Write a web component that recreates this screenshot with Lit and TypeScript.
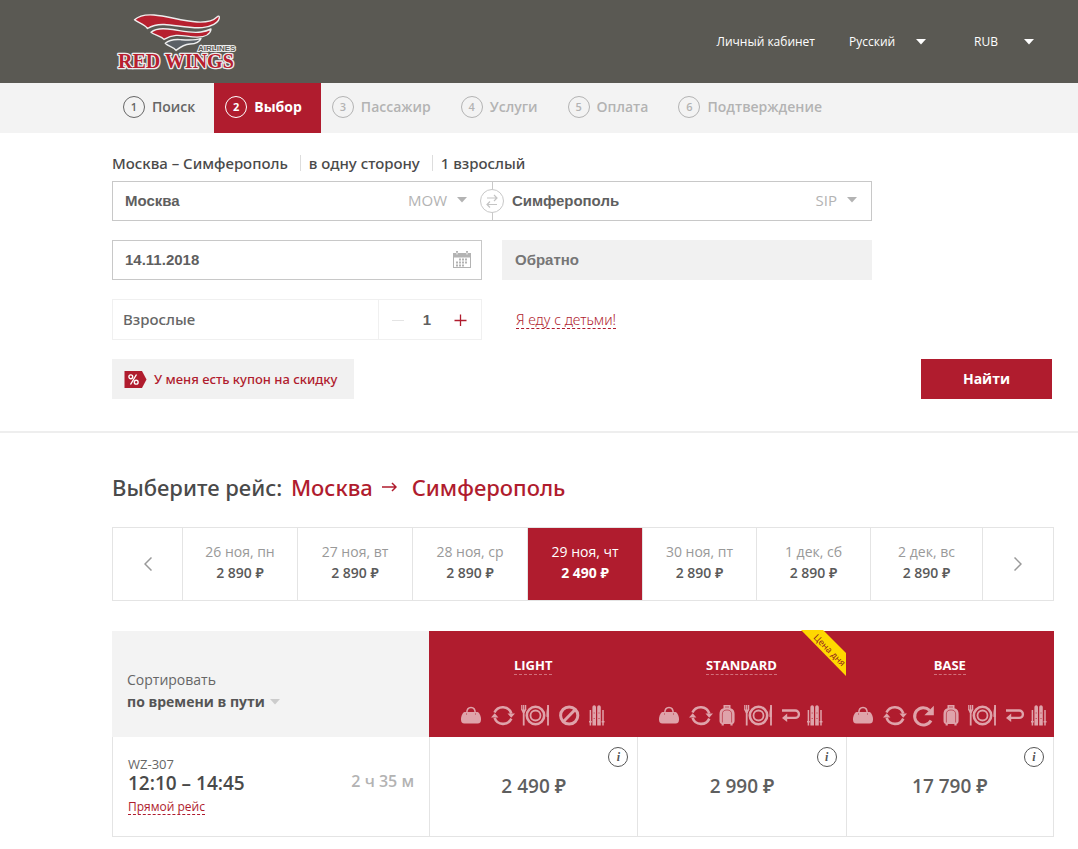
import { LitElement, html, css, svg, nothing } from "lit";
import { customElement, property, state } from "lit/decorators.js";
import { classMap } from "lit/directives/class-map.js";

const base = css`
  *,
  *::before,
  *::after {
    box-sizing: border-box;
  }
  button,
  input,
  select {
    font: inherit;
    color: inherit;
    background: none;
    border: 0;
    border-radius: 0;
    margin: 0;
    padding: 0;
    outline: 0;
  }
  button,
  select {
    cursor: pointer;
  }
  select {
    appearance: none;
  }
  a {
    color: inherit;
    text-decoration: none;
  }
  svg {
    display: block;
    flex: none;
  }
  .medium {
    font-family: "Noto Sans", "Open Sans", sans-serif;
    font-weight: 500;
  }
`;

const caret = svg`<svg class="caret" width="10" height="6" viewBox="0 0 10 6" aria-hidden="true"><path fill="currentColor" d="M0 0h10L5 5.5z"/></svg>`;

type IconName = "bag" | "exchange" | "redo" | "case" | "meal" | "ban" | "back" | "ski";

const iconBox: Record<IconName, number> = { bag: 22, exchange: 22, redo: 22, case: 17, meal: 30, ban: 22, back: 17, ski: 16 };

const iconShape = {
  bag: svg`<path fill="currentColor" d="M3.500 7h13c1.600 0 3.500 4 3.500 7.200 0 2.900-1 4.200-3.400 4.200H3.400C1 18.400 0 17.100 0 14.200 0 11 1.900 7 3.500 7z"/><path fill="none" stroke="currentColor" stroke-width="1.500" d="M5.800 8c0-3.600 1.700-5.500 4.200-5.500s4.200 1.900 4.200 5.500"/><path stroke="#b01c2e" stroke-width=".8" d="M5 9h1M14 9h1"/>`,
  exchange: svg`<g fill="none" stroke="currentColor" stroke-width="2.600"><path d="M3.500 7.500A9 9 0 0 1 20.300 8.500"/><path d="M20.300 13.600A9 9 0 0 1 3.600 12.800"/></g><path fill="currentColor" d="M16.500 8.400H24l-3.800 4.300zM0 12.600h7.400L3.700 8.300z"/>`,
  redo: svg`<path fill="none" stroke="currentColor" stroke-width="3" d="M16.500 5.200A8.700 8.700 0 1 0 18 15.500"/><path fill="currentColor" d="M20.800.8v9.400h-9.400z"/>`,
  case: svg`<path fill="currentColor" d="M4.500 0h7v3.200c3 .6 4.100 2.600 4.100 5.800v6.500c0 2-.6 3-2 3.500v1.500h-2.200V19H4.800v1.500H2.600V19C1 18.500.5 17.500.5 15.500V9c0-3.200 1-5.200 4-5.800z"/><path fill="none" stroke="#b01c2e" stroke-width=".6" d="M3.400 17.500V9c0-2.600 1.500-4 4.600-4s4.600 1.400 4.600 4v8.500M6 2h4"/>`,
  meal: svg`<g fill="none" stroke="currentColor"><circle cx="14.500" cy="10.500" r="8.700" stroke-width="2.600"/><circle cx="14.500" cy="10.500" r="5" stroke-width="1.800"/><path stroke-width="1.300" d="M.8 0v5M2.700 0v5M4.600 0v5"/><path stroke-width="1.800" d="M2.700 6v14.500M27 0v20.500"/></g><path fill="currentColor" d="M0 4.500h5.300L3.600 8H1.800zM27.800 0v12h-2.300c-.3-5 .3-10 2.300-12z"/>`,
  ban: svg`<g fill="none" stroke="currentColor" stroke-width="3"><circle cx="10.200" cy="10.500" r="8.600"/><path d="M4.500 16.500 16 4.700"/></g>`,
  back: svg`<path fill="none" stroke="currentColor" stroke-width="2.400" d="M0 5.500h13.200a3.400 3.400 0 0 1 0 7.400H4"/><path fill="currentColor" d="M0 12.900 5.200 8.600v8.400z"/>`,
  ski: svg`<path fill="currentColor" d="M3.400 20.500V2.300C3.400-.6 7-.6 7 2.300v18.200zM8.200 20.500V2.300c0-2.900 3.600-2.900 3.600 0v18.200z"/><g stroke="currentColor" stroke-width="1.500"><path d="M1.400 5v15.500M14 5v15.500M0 16.800h2.800M12.600 16.800h2.900"/></g><g stroke="#b01c2e" stroke-width=".8"><path d="M4.700 8h1M4.700 13.500h1M9.500 8h1M9.500 13.500h1"/></g>`,
};

@customElement("fare-icon")
class FareIcon extends LitElement {
  @property() name: IconName = "bag";
  static styles = css`
    :host {
      display: block;
      color: #dfa3aa;
    }
    svg {
      display: block;
      overflow: visible;
    }
  `;
  render() {
    return html`<svg width=${iconBox[this.name]} height="21" aria-hidden="true">${iconShape[this.name]}</svg>`;
  }
}

@customElement("site-header")
class SiteHeader extends LitElement {
  static styles = [
    base,
    css`
      :host {
        display: flex;
        align-items: center;
        justify-content: space-between;
        height: 83px;
        padding: 0 44px 0 114px;
        background: #5a5953;
        color: #fff;
        font-size: 12px;
      }
      .menu {
        display: flex;
        align-items: center;
      }
      .pick {
        display: flex;
        align-items: center;
        gap: 20px;
        margin-left: 34px;
      }
      .pick + .pick {
        margin-left: 48px;
        gap: 26px;
      }
      .name {
        font: bold 20px "Liberation Serif", serif;
      }
      .sub {
        font: bold 8px "Liberation Sans", sans-serif;
      }
    `,
  ];
  render() {
    return html`
      <a href="#" aria-label="Red Wings Airlines">
        <svg width="126" height="66" viewBox="114 8 126 66">
          <g stroke="#eee" stroke-width="1.400" stroke-linejoin="round">
            <path fill="#b7202f" d="M134.500 18.800C139 14.500 146 13.400 154 14c14 1 27 6 43 7 9 .5 16-1 20-5 1.500-1.500 2.600-1 2.300 1-1 5-8 8.800-17 9.600-12 1-27-2.600-38-3.100-7-.3-12 1-16.800 4-3-4.500-9-5.500-13-8.700z"/>
            <path fill="#b7202f" d="M151 31.200c4-3.400 10-4 17-3.200 12 1.200 22 4.600 33 3 4-.6 7-1.600 10-3-.4 5-6 8-14 8.100-8 0-14-2.200-21-1.700-5 .3-8.500 1.800-12 4-3-3.700-9.500-4-13-7.200z"/>
            <path fill="#5b6066" d="M165.300 42.200c4-3.500 9-4 15-3.600 8 .6 14 1.200 20.700-1.200-1.500 4-6 5.300-11 5.600-6 .4-9.500 2.900-14 6.400-2-3.400-8-3.800-10.700-7.200z"/>
          </g>
          <text class="name" x="118" y="67" fill="#b7202f" stroke="#eee" stroke-width="2.600" stroke-linejoin="round" paint-order="stroke">RED WINGS</text>
          <text class="sub" x="198" y="50" fill="#5a5953" stroke="#eee" stroke-width="2" paint-order="stroke">AIRLINES</text>
        </svg>
      </a>
      <div class="menu">
        <a href="#">Личный кабинет</a>
        <label class="pick">
          <select aria-label="Язык"><option>Русский</option></select>${caret}
        </label>
        <label class="pick">
          <select aria-label="Валюта"><option>RUB</option></select>${caret}
        </label>
      </div>
    `;
  }
}

@customElement("step-bar")
class StepBar extends LitElement {
  @property({ type: Number }) current = 2;
  static styles = [
    base,
    css`
      :host {
        display: flex;
        height: 50px;
        padding-left: 112px;
        background: #f3f3f3;
        font-size: 14px;
        font-weight: 600;
      }
      .step {
        display: flex;
        align-items: center;
        gap: 7px;
        padding: 0 19px 3px 11px;
        color: #b3b3b3;
      }
      .done {
        color: #666;
      }
      .active {
        background: #b01c2e;
        color: #fff;
        font-weight: 700;
      }
      .num {
        display: grid;
        place-items: center;
        width: 22px;
        height: 22px;
        border: 1px solid currentColor;
        border-radius: 50%;
        font-size: 11px;
      }
    `,
  ];
  render() {
    const steps = ["Поиск", "Выбор", "Пассажир", "Услуги", "Оплата", "Подтверждение"];
    return steps.map((s, i) => {
      const n = i + 1;
      return html`<a href="#" class=${classMap({ step: true, done: n < this.current, active: n === this.current })}
        ><span class="num">${n}</span><span>${s}</span></a
      >`;
    });
  }
}

@customElement("search-form")
class SearchForm extends LitElement {
  @state() adults = 1;
  static styles = [
    base,
    css`
      :host {
        display: block;
        padding: 19px 26px 32px 112px;
        border-bottom: 2px solid #eee;
      }
      .summary {
        display: flex;
        align-items: center;
        height: 22px;
        margin-bottom: 7px;
        font-size: 15px;
        color: #4a4a4a;
      }
      .summary span + span {
        margin-left: 12px;
        padding-left: 8px;
        border-left: 1px solid #ddd;
        line-height: 16px;
      }
      .fields {
        display: grid;
        grid-template-columns: 1fr 1fr;
        gap: 19px 20px;
        max-width: 760px;
      }
      .cities {
        grid-column: 1 / -1;
        display: grid;
        grid-template-columns: 1fr 1fr;
        position: relative;
        height: 40px;
        border: 1px solid #c8c8c8;
      }
      .city {
        display: flex;
        align-items: center;
        gap: 10px;
        padding: 0 25px 2px 12px;
        color: #b3b3b3;
      }
      .city + .city {
        padding: 0 14px 2px 19px;
        border-left: 1px solid #c8c8c8;
      }
      .value {
        flex: 1;
        min-width: 0;
        font: bold 15px "Liberation Sans", sans-serif;
        color: #5f5f5f;
      }
      .code {
        font-size: 15px;
        color: #b3b3b3;
      }
      .swap {
        position: absolute;
        top: 7px;
        left: calc(50% - 12px);
        display: grid;
        place-items: center;
        width: 24px;
        height: 24px;
        border: 1px solid #c8c8c8;
        border-radius: 50%;
        background: #fff;
        color: #c4c4c4;
      }
      .date {
        display: flex;
        align-items: center;
        height: 40px;
        padding: 0 10px 2px 12px;
        border: 1px solid #c8c8c8;
      }
      .return {
        border-color: #f1f1f1;
        background: #f1f1f1;
      }
      .return .value::placeholder {
        color: #767676;
        opacity: 1;
      }
      .people {
        display: flex;
        align-items: center;
        height: 41px;
        padding-left: 10px;
        border: 1px solid #f0f0f0;
        font-size: 15px;
        color: #666;
      }
      .people label {
        flex: 1;
        padding-bottom: 2px;
      }
      .counter {
        display: flex;
        align-items: center;
        justify-content: space-between;
        width: 103px;
        height: 39px;
        padding: 0 13px;
        border-left: 1px solid #f0f0f0;
      }
      .counter .value {
        flex: none;
        width: 20px;
        text-align: center;
      }
      .kids {
        align-self: center;
        justify-self: start;
        margin-left: 14px;
        border-bottom: 1px dashed #b01c2e;
        font-family: "Noto Sans", "Open Sans", sans-serif;
        font-size: 14px;
        line-height: 17px;
        font-weight: 300;
        color: #b01c2e;
      }
      .actions {
        display: flex;
        justify-content: space-between;
        margin-top: 19px;
      }
      .coupon {
        display: flex;
        align-items: center;
        gap: 7px;
        height: 40px;
        padding: 0 17px 0 12px;
        background: #f1f1f1;
        color: #b01c2e;
        font-size: 13px;
      }
      .submit {
        width: 131px;
        height: 40px;
        padding-bottom: 1px;
        background: #b01c2e;
        color: #fff;
        font-size: 14px;
        font-weight: 700;
      }
    `,
  ];
  render() {
    return html`
      <form @submit=${(e: Event) => e.preventDefault()}>
        <div class="summary medium"><span>Москва – Симферополь</span><span>в одну сторону</span><span>1 взрослый</span></div>
        <div class="fields">
          <div class="cities">
            <label class="city"><input class="value" aria-label="Откуда" value="Москва" /><span class="code">MOW</span>${caret}</label>
            <label class="city"><input class="value" aria-label="Куда" value="Симферополь" /><span class="code">SIP</span>${caret}</label>
            <button type="button" class="swap" aria-label="Поменять местами">
              <svg width="12" height="14" viewBox="0 0 12 14" fill="none" stroke="currentColor" stroke-width="1.200">
                <path d="M1 4h10M8 1l3 3-3 3M11 10.500H1M4 7.500l-3 3 3 3" />
              </svg>
            </button>
          </div>
          <label class="date">
            <input class="value" aria-label="Туда" value="14.11.2018" />
            <svg width="18" height="17" viewBox="0 0 18 17">
              <path fill="#b3b3b3" fill-rule="evenodd" d="M0 2h3V0h2v2h8V0h2v2h3v15H0zm1 4.500V16h16V6.500z" />
              <path fill="#fff" d="M3.500 1.500h1v2h-1zM13.500 1.500h1v2h-1z" />
              <path stroke="#b3b3b3" stroke-width="2" stroke-dasharray="2 1" d="M6 8.500h9M3 11.500h12M3 14.500h9" />
            </svg>
          </label>
          <label class="date return"><input class="value" aria-label="Обратно" placeholder="Обратно" /></label>
          <div class="people">
            <label class="medium" for="adults">Взрослые</label>
            <div class="counter">
              <button type="button" aria-label="Меньше" @click=${() => (this.adults = Math.max(1, this.adults - 1))}>
                <svg width="12" height="12"><path stroke="#e4e4e4" stroke-width="1" d="M0 6.500h12" /></svg>
              </button>
              <input id="adults" class="value" .value=${String(this.adults)} readonly />
              <button type="button" aria-label="Больше" @click=${() => this.adults++}>
                <svg width="18" height="12"><path stroke="#b01c2e" stroke-width="1.300" d="M4.500 6.500h12M10.500 .5v12" /></svg>
              </button>
            </div>
          </div>
          <a class="kids" href="#">Я еду с детьми!</a>
        </div>
        <div class="actions">
          <button type="button" class="coupon medium">
            <svg width="23" height="17" viewBox="0 0 23 17">
              <path fill="#b01c2e" d="M.5 0H18l4.500 8.500L18 17H.5z" />
              <g fill="none" stroke="#fff" stroke-width="1.400">
                <circle cx="6.800" cy="5.800" r="1.900" /><circle cx="12.200" cy="11.200" r="1.900" /><path d="M12.500 3.500l-6 10" />
              </g>
            </svg>
            <span>У меня есть купон на скидку</span>
          </button>
          <button class="submit">Найти</button>
        </div>
      </form>
    `;
  }
}

@customElement("date-strip")
class DateStrip extends LitElement {
  @state() picked = 3;
  static styles = [
    base,
    css`
      :host {
        display: grid;
        grid-template-columns: 69px repeat(4, 115fr) repeat(2, 114fr) 112fr 71px;
        height: 74px;
        border: 1px solid #e4e4e4;
      }
      button {
        display: flex;
        flex-direction: column;
        align-items: center;
        justify-content: center;
        padding-bottom: 4px;
        border-left: 1px solid #e4e4e4;
        font-size: 14px;
        line-height: 21px;
        color: #999;
      }
      .arrow {
        padding: 0;
      }
      .arrow:first-of-type {
        border-left: 0;
      }
      .price {
        font-weight: 600;
        color: #5a5a5a;
      }
      .picked,
      .picked .price {
        color: #fff;
      }
      .picked {
        background: #b01c2e;
      }
      .picked .price {
        font-weight: 700;
      }
    `,
  ];
  render() {
    const days = [
      ["26 ноя, пн", "2 890 ₽"],
      ["27 ноя, вт", "2 890 ₽"],
      ["28 ноя, ср", "2 890 ₽"],
      ["29 ноя, чт", "2 490 ₽"],
      ["30 ноя, пт", "2 890 ₽"],
      ["1 дек, сб", "2 890 ₽"],
      ["2 дек, вс", "2 890 ₽"],
    ];
    return html`
      <button class="arrow" aria-label="Раньше">
        <svg width="8" height="14" fill="none" stroke="#999" stroke-width="1.500"><path d="M7.500.5 1 7l6.500 6.500" /></svg>
      </button>
      ${days.map(
        ([d, p], i) => html`<button class=${classMap({ picked: i === this.picked })} @click=${() => (this.picked = i)}>
          <span>${d}</span><span class="price">${p}</span>
        </button>`
      )}
      <button class="arrow" aria-label="Позже">
        <svg width="8" height="14" fill="none" stroke="#999" stroke-width="1.500"><path d="M.5.500 7 7 .5 13.500" /></svg>
      </button>
    `;
  }
}

interface Fare {
  name: string;
  price: string;
  icons: IconName[];
  best?: boolean;
}

@customElement("fare-table")
class FareTable extends LitElement {
  static styles = [
    base,
    css`
      :host {
        display: block;
      }
      table {
        width: 100%;
        table-layout: fixed;
        border-collapse: separate;
        border-spacing: 0;
      }
      th,
      td {
        position: relative;
        padding: 0;
        font-weight: 400;
        text-align: center;
      }
      th {
        height: 106px;
        background: #b01c2e;
        color: #fff;
        vertical-align: top;
      }
      td {
        height: 100px;
        border: 1px solid #e4e4e4;
        border-width: 0 0 1px 1px;
      }
      td:last-child {
        border-right-width: 1px;
      }
      .lead {
        width: 317px;
        text-align: left;
      }
      th.lead {
        padding: 38px 15px 0;
        background: #f3f3f3;
        color: #666;
        font-size: 14px;
        line-height: 22px;
      }
      td.lead {
        padding: 0 15px 2px 15px;
      }
      .sort {
        display: flex;
        align-items: center;
        gap: 5px;
        color: #ccc;
      }
      .sort select {
        color: #555;
        font-weight: 700;
        line-height: 22px;
      }
      .fare {
        display: inline-block;
        margin-top: 25px;
        border-bottom: 1px dashed #d0707b;
        font-size: 13px;
        line-height: 18px;
        font-weight: 700;
      }
      .icons {
        display: flex;
        justify-content: center;
        gap: 8px;
        margin-top: 30px;
      }
      .ribbon {
        position: absolute;
        top: -1px;
        right: 0;
        overflow: visible;
      }
      .ribbon text {
        font: 9px "Open Sans", sans-serif;
        fill: #8c1420;
      }
      .flight {
        display: flex;
        align-items: center;
        justify-content: space-between;
        color: #4a4a4a;
      }
      .no {
        font-size: 13px;
        line-height: 17px;
        color: #666;
      }
      .time {
        font-size: 19px;
        line-height: 20px;
        font-weight: 600;
      }
      .direct {
        display: inline-block;
        margin-top: 6px;
        border-bottom: 1px dashed #b01c2e;
        color: #b01c2e;
        font-size: 12px;
        line-height: 15px;
      }
      .length {
        font-size: 16px;
        font-weight: 600;
        color: #b3b3b3;
        margin-bottom: 10px;
      }
      .price {
        padding-bottom: 2px;
        font-size: 19px;
        font-weight: 600;
        line-height: 24px;
        color: #5f5f5f;
      }
      .info {
        position: absolute;
        top: 10px;
        right: 9px;
        width: 20px;
        height: 20px;
        border: 1px solid #555;
        border-radius: 50%;
        font: italic bold 12px/16px "Liberation Serif", serif;
        color: #555;
      }
    `,
  ];
  fares: Fare[] = [
    { name: "LIGHT", price: "2 490 ₽", icons: ["bag", "exchange", "meal", "ban", "ski"] },
    { name: "STANDARD", price: "2 990 ₽", icons: ["bag", "exchange", "case", "meal", "back", "ski"], best: true },
    { name: "BASE", price: "17 790 ₽", icons: ["bag", "exchange", "redo", "case", "meal", "back", "ski"] },
  ];
  render() {
    return html`
      <table>
        <thead>
          <tr>
            <th class="lead">
              <label for="sort">Сортировать</label>
              <div class="sort"><select id="sort"><option>по времени в пути</option></select>${caret}</div>
            </th>
            ${this.fares.map(
              (f) => html`<th scope="col">
                <a class="fare" href="#">${f.name}</a>
                <div class="icons">${f.icons.map((n) => html`<fare-icon name=${n}></fare-icon>`)}</div>
                ${f.best
                  ? html`<svg class="ribbon" width="45" height="46">
                      <path fill="#ffd800" d="M0 0h22l23 23v23z" />
                      <text transform="translate(12 8) rotate(45)">Цена дня</text>
                    </svg>`
                  : nothing}
              </th>`
            )}
          </tr>
        </thead>
        <tbody>
          <tr>
            <td class="lead">
              <div class="flight">
                <div>
                  <div class="no">WZ-307</div>
                  <div class="time">12:10 – 14:45</div>
                  <a class="direct" href="#">Прямой рейс</a>
                </div>
                <div class="length">2 ч 35 м</div>
              </div>
            </td>
            ${this.fares.map(
              (f) => html`<td><button class="price">${f.price}</button><button class="info" aria-label="Условия тарифа">i</button></td>`
            )}
          </tr>
        </tbody>
      </table>
    `;
  }
}

@customElement("app-root")
class AppRoot extends LitElement {
  static styles = [
    base,
    css`
      :host {
        display: block;
        min-height: 100vh;
        background: #fff;
        font-family: "Open Sans", "Noto Sans", sans-serif;
      }
      main {
        display: flex;
        flex-direction: column;
        gap: 24px;
        padding: 39px 24px 12px 112px;
      }
      h1 {
        margin: 0 0 1px;
        font-size: 22px;
        line-height: 30px;
        color: #4a4a4a;
      }
      .route {
        display: inline-flex;
        align-items: center;
        gap: 9px;
        margin-left: 3px;
        color: #b01c2e;
      }
      .route svg {
        margin-right: 6px;
      }
      fare-table {
        margin-top: 6px;
      }
    `,
  ];
  render() {
    return html`
      <site-header></site-header>
      <step-bar></step-bar>
      <search-form></search-form>
      <main>
        <h1 class="medium">
          Выберите рейс:
          <span class="route"
            >Москва<svg width="15" height="10" fill="none" stroke="#b01c2e" stroke-width="1.500"><path d="M0 5h14M10 1l4 4-4 4" /></svg>Симферополь</span
          >
        </h1>
        <date-strip></date-strip>
        <fare-table></fare-table>
      </main>
    `;
  }
}
